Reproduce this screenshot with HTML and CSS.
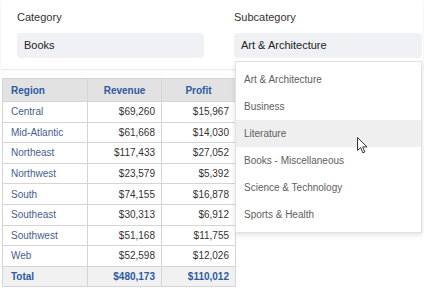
FILE: index.html
```html
<!DOCTYPE html>
<html>
<head>
    <title>Books by Region</title>
    <link rel="stylesheet" href="styles.css">
</head>
<body>
    <div class="filters">
        <div class="field">
            <div class="label">Category</div>
            <div class="select">Books</div>
        </div>
        <div class="field">
            <div class="label">Subcategory</div>
            <div class="select">Art &amp; Architecture</div>
            <ul class="menu">
                <li>Art &amp; Architecture</li>
                <li>Business</li>
                <li class="hover">Literature</li>
                <li>Books - Miscellaneous</li>
                <li>Science &amp; Technology</li>
                <li>Sports &amp; Health</li>
                <svg class="cursor" width="11" height="17" viewBox="0 0 11 17">
                    <path d="M0.5 0.5 L0.5 13.5 L3.6 10.6 L5.8 15.8 L7.8 15 L5.7 9.9 L10 9.9 Z" fill="#fff" stroke="#333" stroke-width="1"/>
                </svg>
            </ul>
        </div>
    </div>

    <table class="report">
        <colgroup>
            <col class="col-region">
            <col class="col-num">
            <col class="col-num">
        </colgroup>
        <thead>
            <tr>
                <th class="region">Region</th>
                <th>Revenue</th>
                <th>Profit</th>
            </tr>
        </thead>
        <tbody>
            <tr><td class="region">Central</td><td>$69,260</td><td>$15,967</td></tr>
            <tr><td class="region">Mid-Atlantic</td><td>$61,668</td><td>$14,030</td></tr>
            <tr><td class="region">Northeast</td><td>$117,433</td><td>$27,052</td></tr>
            <tr><td class="region">Northwest</td><td>$23,579</td><td>$5,392</td></tr>
            <tr><td class="region">South</td><td>$74,155</td><td>$16,878</td></tr>
            <tr><td class="region">Southeast</td><td>$30,313</td><td>$6,912</td></tr>
            <tr><td class="region">Southwest</td><td>$51,168</td><td>$11,755</td></tr>
            <tr><td class="region">Web</td><td>$52,598</td><td>$12,026</td></tr>
            <tr class="total"><td class="region">Total</td><td>$480,173</td><td>$110,012</td></tr>
        </tbody>
    </table>
</body>
</html>
```

FILE: styles.css
```css
body {
    margin: 0;
    font-family: "Liberation Sans", Arial, sans-serif;
    background-color: #fff;
    color: #333;
}
.filters {
    display: grid;
    grid-template-columns: 187px 188px;
    column-gap: 30px;
    margin: 0 1px;
    padding: 11px 1px 11px 16px;
    background-color: #fff;
    box-shadow: 0 1px 2px rgba(0, 0, 0, 0.1);
}
.field {
    position: relative;
}
.label {
    font-size: 11px;
    line-height: 13px;
    color: #333;
    margin-bottom: 9px;
}
.select {
    height: 25px;
    line-height: 24px;
    padding-left: 7px;
    font-size: 11px;
    color: #222;
    background-color: #eff1f4;
    border-radius: 4px;
}
.menu {
    position: absolute;
    top: 50px;
    left: 1px;
    width: 187px;
    box-sizing: border-box;
    list-style: none;
    margin: 0;
    padding: 4px 0;
    background-color: #fff;
    border: 1px solid #e2e2e2;
    box-shadow: 0 2px 5px rgba(0, 0, 0, 0.12);
    z-index: 2;
}
.menu li {
    height: 27px;
    line-height: 27px;
    padding-left: 8px;
    font-size: 10px;
    color: #606060;
}
.menu li.hover {
    background-color: #efefef;
}
.cursor {
    position: absolute;
    left: 121px;
    top: 75px;
}
.report {
    border-collapse: collapse;
    table-layout: fixed;
    width: 234px;
    margin: 9px 0 0 2px;
    font-size: 10px;
}
.col-region {
    width: 85px;
}
.col-num {
    width: 74px;
}
.report th,
.report td {
    border: 1px solid #d5d5d5;
    height: 19.6px;
    padding: 0 6px 0 8px;
    text-align: right;
    color: #333;
}
.report th {
    height: 22px;
    background-color: #e2e2e2;
    color: #2d5ba3;
    text-align: center;
    padding: 0;
}
.report th.region {
    text-align: left;
    padding-left: 8px;
}
.report td.region {
    text-align: left;
    color: #475e8e;
}
.report .total td {
    background-color: #f1f1f1;
    color: #2d5ba3;
    font-weight: bold;
}
```
